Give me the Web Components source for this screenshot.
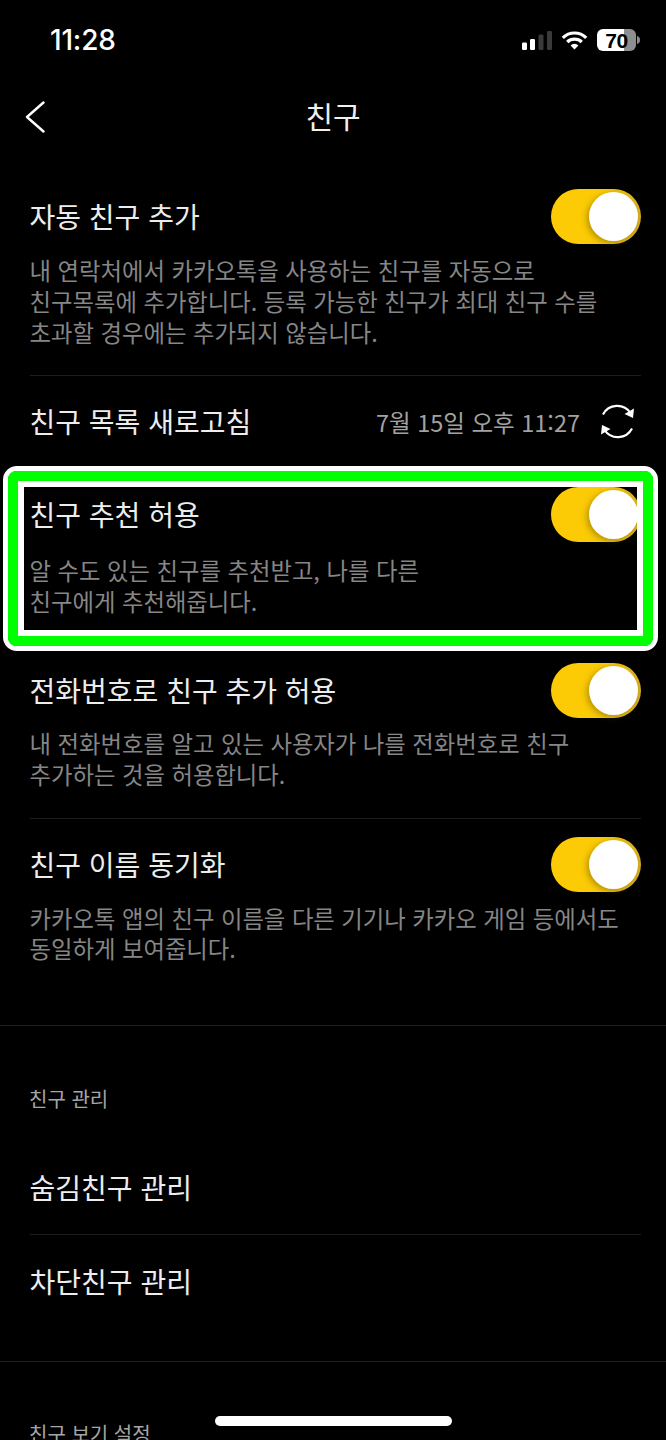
<!DOCTYPE html>
<html lang="ko"><head><meta charset="utf-8"><style>
html,body{margin:0;padding:0;background:#000}
body{width:666px;height:1440px;overflow:hidden;position:relative;font-family:"Noto Sans CJK KR","Noto Sans",sans-serif}
</style></head><body>
<template id="t-status"><style>
:host{display:flex;align-items:center;justify-content:space-between;height:80px;padding:0 26px 0 50px;box-sizing:border-box;color:#fff}
.time{font:500 28px/1 Inter,"Liberation Sans",sans-serif;letter-spacing:-.2px}
.icons{display:flex;align-items:center;gap:9px}
.bat{display:flex;align-items:center;gap:1px}
.cell{position:relative;width:39px;height:22px;border-radius:6px;background:linear-gradient(90deg,#fff 0 70%,#8e8e8e 70%);display:flex;align-items:center;justify-content:center;color:#000;font:700 21px/1 "Liberation Sans",sans-serif;letter-spacing:-.5px}
</style>
<div class="time">11:28</div>
<div class="icons">
<svg width="30" height="19" viewBox="0 0 30 19"><rect x="0" y="11.5" width="5" height="7.5" rx="1.2" fill="#fff"/><rect x="8" y="8" width="5" height="11" rx="1.2" fill="#fff"/><rect x="16.500" y="3.500" width="5" height="15.500" rx="1.200" fill="#3a3a3a"/><rect x="25" y="0" width="5" height="19" rx="1.200" fill="#3a3a3a"/></svg>
<svg width="27" height="19" viewBox="0 0 27 19" fill="none" stroke="#fff" stroke-width="3.200"><path d="M1.800 6.800C8.300 .4 18.700 .4 25.200 6.800"/><path d="M6.200 11C10.300 7.200 16.700 7.200 20.800 11"/><path d="M13.500 18.500l-3.900-4a5.400 5.400 0 0 1 7.800 0z" fill="#fff" stroke="none"/></svg>
<div class="bat"><div class="cell">70</div><svg width="3" height="8" viewBox="0 0 3 8"><path d="M0 0c2 .6 3 2 3 4s-1 3.400-3 4z" fill="#8e8e8e"/></svg></div>
</div></template>

<template id="t-nav"><style>
:host{display:flex;align-items:center;justify-content:center;position:relative;height:72px;color:#f0f0f0;font-size:30px;font-weight:400}
span{margin-top:-2px}
svg{position:absolute;left:25px;top:21px}
</style>
<svg width="20" height="32" viewBox="0 0 20 32" fill="none" stroke="#fff" stroke-width="2.400" stroke-linecap="round" stroke-linejoin="round"><path d="M18.500 1.500 2 16l16.500 14.500"/></svg>
<span><slot></slot></span></template>

<template id="t-toggle"><style>
:host{display:block;position:relative;width:90px;height:55px;border-radius:28px;background:linear-gradient(90deg,#fccb05 0 60%,#d9b021 100%);flex:none}
i{position:absolute;right:3px;top:3px;width:49px;height:49px;border-radius:50%;background:#fff;box-shadow:-2px 2px 6px rgba(90,70,0,.45)}
</style><i></i></template>

<template id="t-row"><style>
:host{display:block;position:relative;padding:var(--pad,0) 25px 0 29.500px}
.top{display:flex;align-items:center;justify-content:space-between;height:55px}
.title{font-size:28px;line-height:55px;height:55px;color:#ededed;white-space:nowrap}
.desc{margin-top:var(--gap,10px);font-size:23.350px;line-height:30.800px;color:#868686;white-space:pre-line}
.desc:empty{display:none}
</style>
<div class="top"><div class="title"><slot name="title"></slot></div><slot name="side"></slot></div>
<div class="desc"><slot name="desc"></slot></div></template>

<template id="t-divider"><style>
:host{display:block;height:1px;margin:var(--m,0 25px 0 30px);background:#1c1c1c}
</style></template>

<template id="t-section"><style>
:host{display:block;padding:0 29px;height:30px;line-height:30px;font-size:20px;color:#a6a6a6}
</style><slot></slot></template>

<template id="t-refresh"><style>
:host{display:flex;align-items:center;gap:19px;color:#a2a2a2;font-size:23.500px;white-space:nowrap;margin-right:5px}
svg{display:block}
</style><span><slot></slot></span>
<svg width="37" height="35" viewBox="0 0 37 35" fill="none" stroke="#fff" stroke-width="2.200"><path d="M31.500 9A16 16 0 0 0 4 10.500"/><path d="M5.500 26A16 16 0 0 0 33 24.500"/><path d="M35 4.500 34 14l-8.500-4z" fill="#fff" stroke="none"/><path d="M2 30.500 3 21l8.500 4z" fill="#fff" stroke="none"/></svg></template>

<template id="t-frame"><style>
:host{position:absolute;left:3px;top:466px;width:655px;height:185px;box-sizing:border-box;border:5px solid #fff;border-radius:14px;pointer-events:none}
.g{box-sizing:border-box;height:100%;border:10px solid #00ff00;border-radius:8px}
.w{box-sizing:border-box;height:100%;border:6px solid #fff}
</style><div class="g"><div class="w"></div></div></template>

<template id="t-home"><style>
:host{position:absolute;left:215px;top:1416px;width:237px;height:10px;border-radius:5px;background:#fff}
</style></template>

<script>
for (const [name,tpl] of [['k-status','t-status'],['k-nav','t-nav'],['k-toggle','t-toggle'],['k-row','t-row'],['k-divider','t-divider'],['k-section','t-section'],['k-refresh','t-refresh'],['k-frame','t-frame'],['k-home','t-home']]) {
  customElements.define(name, class extends HTMLElement {
    constructor(){super();this.attachShadow({mode:'open'}).appendChild(document.getElementById(tpl).content.cloneNode(true));}
  });
}
</script>

<k-status></k-status>
<k-nav>친구</k-nav>

<k-row style="--pad:37px;--gap:11px">
  <span slot="title">자동 친구 추가</span><k-toggle slot="side"></k-toggle>
  <span slot="desc">내 연락처에서 카카오톡을 사용하는 친구를 자동으로
친구목록에 추가합니다. 등록 가능한 친구가 최대 친구 수를
초과할 경우에는 추가되지 않습니다.</span>
</k-row>
<k-divider style="margin-top:28px"></k-divider>
<k-row style="--pad:18px">
  <span slot="title">친구 목록 새로고침</span><k-refresh slot="side">7월 15일 오후 11:27</k-refresh>
</k-row>
<k-row style="--pad:28px;--gap:13px">
  <span slot="title">친구 추천 허용</span><k-toggle slot="side"></k-toggle>
  <span slot="desc">알 수도 있는 친구를 추천받고, 나를 다른
친구에게 추천해줍니다.</span>
</k-row>
<k-row style="--pad:46px;--gap:10px">
  <span slot="title">전화번호로 친구 추가 허용</span><k-toggle slot="side"></k-toggle>
  <span slot="desc">내 전화번호를 알고 있는 사용자가 나를 전화번호로 친구
추가하는 것을 허용합니다.</span>
</k-row>
<k-divider style="margin-top:28px"></k-divider>
<k-row style="--pad:18px;--gap:11px">
  <span slot="title">친구 이름 동기화</span><k-toggle slot="side"></k-toggle>
  <span slot="desc">카카오톡 앱의 친구 이름을 다른 기기나 카카오 게임 등에서도
동일하게 보여줍니다.</span>
</k-row>
<k-divider style="--m:61px 0 0 0"></k-divider>
<k-section style="margin-top:58px">친구 관리</k-section>
<k-row style="--pad:46px"><span slot="title">숨김친구 관리</span></k-row>
<k-divider style="margin-top:19px"></k-divider>
<k-row style="--pad:19px"><span slot="title">차단친구 관리</span></k-row>
<k-divider style="--m:52px 0 0 0"></k-divider>
<k-section style="margin-top:57px">친구 보기 설정</k-section>

<k-frame></k-frame>
<k-home></k-home>
</body></html>
